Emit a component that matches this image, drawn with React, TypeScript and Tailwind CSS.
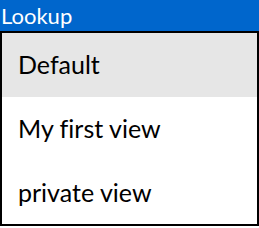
import React from "react";

export default function App() {
  const items = ["Default", "My first view", "private view"];
  return (
    <div
      className="w-[259px] h-[228px] bg-white flex flex-col [font-variant-ligatures:none]"
      style={{ fontFamily: 'Lato, "Noto Sans", sans-serif' }}
    >
      <div className="h-[31px] bg-[#0066cc] text-white text-[22px] leading-[31px] pl-[1px] overflow-hidden">
        Lookup
      </div>
      <div className="h-[195px] border-2 border-black flex flex-col">
        {items.map((t, i) => (
          <div
            key={t}
            className={`${i === 0 ? "bg-[#e6e6e6]" : "bg-white"} ${i === 2 ? "h-[63px]" : "h-[64px]"} flex items-center pl-[16px] text-[25px] text-black`}
          >
            {t}
          </div>
        ))}
      </div>
    </div>
  );
}
